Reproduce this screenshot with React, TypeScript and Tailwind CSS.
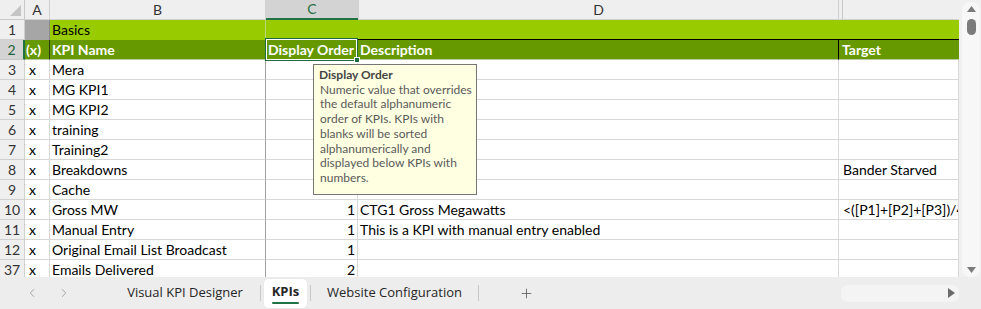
import React from 'react';
import { ChevronLeft, ChevronRight, Plus } from 'lucide-react';

type Row = { n: string; b: string; c?: string; d?: string; e?: string };

const rows: Row[] = [
  { n: '3', b: 'Mera' },
  { n: '4', b: 'MG KPI1' },
  { n: '5', b: 'MG KPI2' },
  { n: '6', b: 'training' },
  { n: '7', b: 'Training2' },
  { n: '8', b: 'Breakdowns', e: 'Bander Starved' },
  { n: '9', b: 'Cache' },
  { n: '10', b: 'Gross MW', c: '1', d: 'CTG1 Gross Megawatts', e: '<([P1]+[P2]+[P3])/4' },
  { n: '11', b: 'Manual Entry', c: '1', d: 'This is a KPI with manual entry enabled' },
  { n: '12', b: 'Original Email List Broadcast', c: '1' },
  { n: '37', b: 'Emails Delivered', c: '2' },
];

function UpTri() {
  return (
    <svg width="9" height="6" viewBox="0 0 9 6">
      <polygon points="4.5,0 9,6 0,6" fill="#7b7b7b" />
    </svg>
  );
}
function DownTri() {
  return (
    <svg width="9" height="6" viewBox="0 0 9 6">
      <polygon points="0,0 9,0 4.5,6" fill="#7b7b7b" />
    </svg>
  );
}
function RightTri() {
  return (
    <svg width="7" height="10" viewBox="0 0 7 10">
      <polygon points="0,0 7,5 0,10" fill="#6b6b6b" />
    </svg>
  );
}

export default function App() {
  return (
    <div className="w-[981px] h-[309px] overflow-hidden bg-[#ededed] flex flex-col font-[Lato,sans-serif] text-[14px] text-black">
      <div className="flex h-[277px]">
        {/* sheet */}
        <div className="relative w-[959px] h-[277px] overflow-hidden bg-white">
          {/* column headers */}
          <div className="flex h-[20px] bg-[#efefef] text-[#333] leading-[19px]">
            <div className="w-[25px] shrink-0 border-r border-b border-[#c8c8c8] flex items-end justify-end pr-[3px] pb-[3px]">
              <svg width="11" height="11" viewBox="0 0 11 11">
                <polygon points="11,0 11,11 0,11" fill="#c4c4c4" />
              </svg>
            </div>
            <div className="w-[25px] shrink-0 border-r border-b border-[#d0d0d0] text-center">A</div>
            <div className="w-[216px] shrink-0 border-r border-b border-[#d0d0d0] text-center">B</div>
            <div className="w-[92px] shrink-0 bg-[#d3d3d3] border-b-2 border-[#217346] text-center text-[#1f6e43] leading-[18px]">C</div>
            <div className="w-[481px] shrink-0 border-r border-l border-b border-[#d0d0d0] text-center">D</div>
            <div className="w-[120px] shrink-0 border-b border-[#d0d0d0] flex">
              <div className="w-[3px]" />
              <div className="flex-1 border-l border-[#c8c8c8]" />
            </div>
          </div>

          {/* row 1 */}
          <div className="flex h-[20px] leading-[19px]">
            <div className="w-[25px] shrink-0 bg-[#efefef] border-r border-b border-[#d0d0d0] text-center text-[#333]">1</div>
            <div className="w-[25px] shrink-0 bg-[#a6a6a6] border-r border-[#8a8a8a]" />
            <div className="w-[216px] shrink-0 bg-[#99cc00] border-r border-[#b8d66a] pl-[2px]">Basics</div>
            <div className="w-[92px] shrink-0 bg-[#99cc00] border-b border-black" />
            <div className="w-[481px] shrink-0 bg-[#99cc00] border-b border-black" />
            <div className="w-[120px] shrink-0 bg-[#99cc00] border-b border-black" />
          </div>

          {/* row 2 */}
          <div className="flex h-[20px] leading-[19px] font-bold text-white">
            <div className="w-[25px] shrink-0 bg-[#d3d3d3] border-r-2 border-r-[#217346] border-b border-b-[#c8c8c8] text-center font-normal text-[#1f5f3a]">2</div>
            <div className="w-[25px] shrink-0 bg-[#669900] border-r border-[#2d3d10] border-b border-b-[#b8c8a0] pl-[1px]">(x)</div>
            <div className="w-[216px] shrink-0 bg-[#669900] border-b border-[#b8c8a0] pl-[2px]">KPI Name</div>
            <div className="w-[92px] shrink-0 bg-[#669900] border-b border-[#b8c8a0] pl-[2px] whitespace-nowrap">Display Order</div>
            <div className="w-[481px] shrink-0 bg-[#669900] border-r border-r-black border-b border-b-[#b8c8a0] pl-[2px]">Description</div>
            <div className="w-[120px] shrink-0 bg-[#669900] border-b border-[#b8c8a0] pl-[3px]">Target</div>
          </div>

          {/* data rows */}
          {rows.map((r) => (
            <div key={r.n} className="flex h-[20px] leading-[19px]">
              <div className="w-[25px] shrink-0 bg-[#efefef] border-r border-b border-[#d0d0d0] text-center text-[#333]">{r.n}</div>
              <div className="w-[25px] shrink-0 border-r border-b border-[#d8d8d8] pl-[4px]">x</div>
              <div className="w-[216px] shrink-0 border-r border-r-[#a0a0a0] border-b border-b-[#d8d8d8] pl-[2px] whitespace-nowrap">{r.b}</div>
              <div className="w-[92px] shrink-0 border-r border-b border-[#d8d8d8] text-right pr-[2px]">{r.c ?? ''}</div>
              <div className="w-[481px] shrink-0 border-r border-b border-[#d8d8d8] pl-[2px] whitespace-nowrap">{r.d ?? ''}</div>
              <div className="w-[120px] shrink-0 border-r border-b border-[#d8d8d8] pl-[4px] whitespace-nowrap overflow-hidden">{r.e ?? ''}</div>
            </div>
          ))}

          {/* active cell C2 */}
          <div className="absolute left-[265px] top-[38px] w-[93px] h-[23px] border border-[#1e6b41]">
            <div className="w-full h-full border border-white" />
          </div>
          <div className="absolute left-[354px] top-[57px] w-[6px] h-[6px] bg-[#1e6b41] border border-white" />

          {/* comment tooltip */}
          <div className="absolute left-[313px] top-[64px] w-[164px] h-[131px] bg-[#ffffe1] border border-[#767676] pl-[5px] pt-[3px] text-[12px] leading-[14.7px] text-[#5a5a5a] whitespace-nowrap">
            <div className="font-bold text-[#444]">Display Order</div>
            <div className="pl-[1px]">
              <div>Numeric value that overrides</div>
              <div>the default alphanumeric</div>
              <div>order of KPIs. KPIs with</div>
              <div>blanks will be sorted</div>
              <div>alphanumerically and</div>
              <div>displayed below KPIs with</div>
              <div>numbers.</div>
            </div>
          </div>
        </div>

        {/* vertical scrollbar */}
        <div className="w-[22px] h-[277px] bg-[#f0f0f0] pl-[3px] pr-[1px] pt-[2px]">
          <div className="h-[275px] rounded-[8px] bg-[#f7f7f7] flex flex-col items-center pt-[4px] pb-[4px]">
            <UpTri />
            <div className="mt-[7px] w-[9px] h-[16px] rounded-full bg-[#7b7b7b]" />
            <div className="flex-1" />
            <DownTri />
          </div>
        </div>
      </div>

      {/* sheet tabs */}
      <div className="flex items-center h-[32px] bg-[#ededed] font-['Open_Sans',sans-serif] text-[13px] text-[#262626]">
        <div className="w-[25px]" />
        <ChevronLeft size={14} strokeWidth={1.5} color="#999999" />
        <div className="w-[18px]" />
        <ChevronRight size={14} strokeWidth={1.5} color="#999999" />
        <div className="w-[39px]" />
        <div className="w-[150px] text-center">Visual KPI Designer</div>
        <div className="w-px h-[16px] bg-[#c8c8c8]" />
        <div className="w-[3px]" />
        <div className="w-[43px] h-[29px] bg-white rounded-[4px] shadow-[0_0_1px_rgba(0,0,0,0.15)] flex flex-col items-center justify-center">
          <div className="font-bold leading-[16px] mt-[1px]">KPIs</div>
          <div className="mt-[3px] w-[27px] h-[2px] rounded-full bg-[#217346]" />
        </div>
        <div className="w-[3px]" />
        <div className="w-px h-[16px] bg-[#c8c8c8]" />
        <div className="w-[167px] text-center">Website Configuration</div>
        <div className="w-px h-[16px] bg-[#c8c8c8]" />
        <div className="w-[95px] flex justify-center">
          <Plus size={15} strokeWidth={1.25} color="#555" />
        </div>
        <div className="flex-1" />
        <div className="w-[118px] h-[17px] rounded-[6px] bg-[#f4f4f4] flex items-center justify-end pr-[4px]">
          <RightTri />
        </div>
        <div className="w-[22px]" />
      </div>
    </div>
  );
}
